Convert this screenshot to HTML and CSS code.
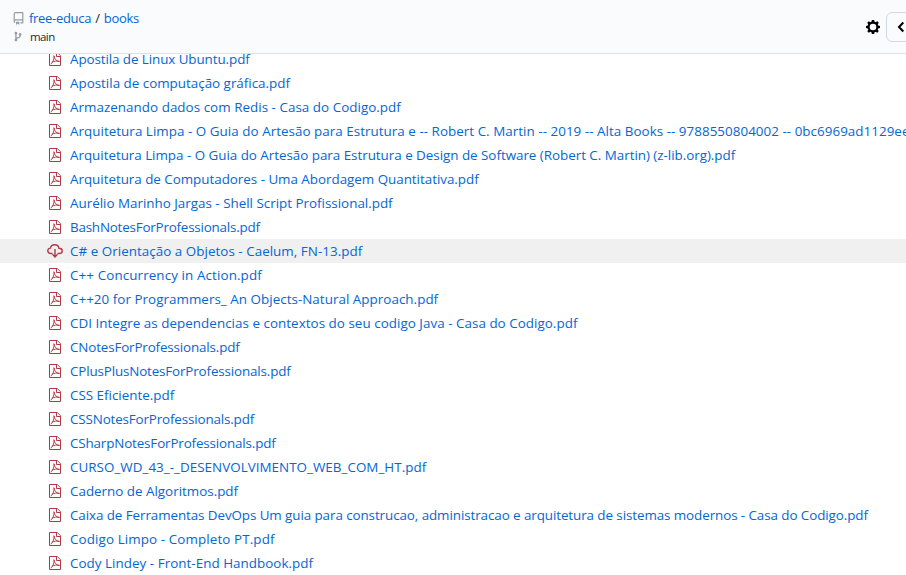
FILE: index.html
```html
<!DOCTYPE html>
<html lang="pt">
<head>
<meta charset="utf-8">
<title>free-educa / books</title>
<link rel="stylesheet" href="styles.css">
</head>
<body>
<svg class="defs" aria-hidden="true">
  <symbol id="pdf" viewBox="0 0 12 16"><path d="M.5 1.500h7.800l3.200 3.300v9.700H.5z"/><path d="M7.500 1.500v4h4" /><path class="thin" d="M1.800 13C3.500 12 5.200 8.500 5.200 5M4.700 4.500c1 2.200 1.200 5.100 5.800 6.200M3 11.200c2-1.100 4.700-1.500 7.500-.9"/></symbol>
</svg>
<header class="header">
  <div class="titles">
    <div class="repo"><svg class="repo-icon" viewBox="0 0 16 16"><path d="M2 2.5A2.5 2.5 0 0 1 4.5 0h8.75a.75.75 0 0 1 .75.75v12.5a.75.75 0 0 1-.75.75h-2.5a.75.75 0 0 1 0-1.5h1.75v-2h-8a1 1 0 0 0-.714 1.7.75.75 0 1 1-1.072 1.05A2.495 2.495 0 0 1 2 11.5Zm10.5-1h-8a1 1 0 0 0-1 1v6.708A2.486 2.486 0 0 1 4.5 9h8ZM5 12.25a.25.25 0 0 1 .25-.25h3.5a.25.25 0 0 1 .25.25v3.25a.25.25 0 0 1-.4.2l-1.45-1.087a.249.249 0 0 0-.3 0L5.4 15.7a.25.25 0 0 1-.4-.2Z"/></svg><a class="owner">free-educa</a><span class="slash">/</span><a>books</a></div>
    <div class="branch"><svg class="branch-icon" viewBox="0 0 10 16"><path d="M10 5c0-1.11-.89-2-2-2a1.993 1.993 0 0 0-1 3.72v.3c-.02.52-.23.98-.63 1.38-.4.4-.86.61-1.38.63-.83.02-1.48.16-2 .45V4.72a1.993 1.993 0 0 0-1-3.72C.88 1 0 1.89 0 3a2 2 0 0 0 1 1.72v6.56c-.59.35-1 .99-1 1.72 0 1.11.89 2 2 2 1.11 0 2-.89 2-2 0-.53-.2-1-.53-1.36.09-.06.48-.41.59-.47.25-.11.56-.17.94-.17 1.05-.05 1.95-.45 2.75-1.25S8.95 7.77 9 6.73h-.02C9.59 6.37 10 5.73 10 5z"/></svg><span>main</span></div>
  </div>
  <svg class="gear" viewBox="0 0 14 14"><path fill-rule="evenodd" d="M5.900 0h2.200l.5 1.800 1 .4 1.600-.9 1.500 1.500-.9 1.600.4 1 1.800.5v2.200l-1.800.5-.4 1 .9 1.600-1.500 1.500-1.600-.9-1 .4-.5 1.800H5.900l-.5-1.800-1-.4-1.600.9-1.500-1.500.9-1.600-.4-1L0 8.100V5.900l1.800-.5.4-1-.9-1.600 1.500-1.500 1.600.9 1-.4zM7 3.700a3.300 3.300 0 1 0 0 6.600 3.300 3.300 0 0 0 0-6.600z"/></svg>
  <button class="toggle" aria-label="Toggle"><svg viewBox="0 0 8 12"><path d="M6.300 1.500 2 6l4.300 4.500"/></svg></button>
</header>
<ul class="files">
  <li class="snug"><svg><use href="#pdf"/></svg><a>Apostila de Linux Ubuntu.pdf</a></li>
  <li><svg><use href="#pdf"/></svg><a>Apostila de computação gráfica.pdf</a></li>
  <li class="wide"><svg><use href="#pdf"/></svg><a>Armazenando dados com Redis - Casa do Codigo.pdf</a></li>
  <li class="wide"><svg><use href="#pdf"/></svg><a>Arquitetura Limpa - O Guia do Artesão para Estrutura e -- Robert C. Martin -- 2019 -- Alta Books -- 9788550804002 -- 0bc6969ad1129ee</a></li>
  <li class="trim"><svg><use href="#pdf"/></svg><a>Arquitetura Limpa - O Guia do Artesão para Estrutura e Design de Software (Robert C. Martin) (z-lib.org).pdf</a></li>
  <li class="trim"><svg><use href="#pdf"/></svg><a>Arquitetura de Computadores - Uma Abordagem Quantitativa.pdf</a></li>
  <li><svg><use href="#pdf"/></svg><a>Aurélio Marinho Jargas - Shell Script Profissional.pdf</a></li>
  <li class="tighter"><svg><use href="#pdf"/></svg><a>BashNotesForProfessionals.pdf</a></li>
  <li class="hovered wide"><svg class="cloud" viewBox="0 0 16 16"><path d="M5.500 10.500H3.800C2 10.500.8 9.400.8 7.800c0-1.500 1.100-2.600 2.600-2.700C3.800 3.100 5.500 1.800 7.600 1.800c2.400 0 4.100 1.500 4.300 3.500 1.900 0 3.300 1 3.300 2.600s-1.200 2.600-3 2.600h-1.700"/><path d="M8 6v7.500M5.500 11.300 8 14l2.500-2.700"/></svg><a>C# e Orientação a Objetos - Caelum, FN-13.pdf</a></li>
  <li class="wider"><svg><use href="#pdf"/></svg><a>C++ Concurrency in Action.pdf</a></li>
  <li class="wide"><svg><use href="#pdf"/></svg><a>C++20 for Programmers_ An Objects-Natural Approach.pdf</a></li>
  <li class="wide"><svg><use href="#pdf"/></svg><a>CDI Integre as dependencias e contextos do seu codigo Java - Casa do Codigo.pdf</a></li>
  <li class="tight"><svg><use href="#pdf"/></svg><a>CNotesForProfessionals.pdf</a></li>
  <li class="tight"><svg><use href="#pdf"/></svg><a>CPlusPlusNotesForProfessionals.pdf</a></li>
  <li><svg><use href="#pdf"/></svg><a>CSS Eficiente.pdf</a></li>
  <li class="tight"><svg><use href="#pdf"/></svg><a>CSSNotesForProfessionals.pdf</a></li>
  <li class="tight"><svg><use href="#pdf"/></svg><a>CSharpNotesForProfessionals.pdf</a></li>
  <li class="wide"><svg><use href="#pdf"/></svg><a>CURSO_WD_43_-_DESENVOLVIMENTO_WEB_COM_HT.pdf</a></li>
  <li><svg><use href="#pdf"/></svg><a>Caderno de Algoritmos.pdf</a></li>
  <li class="snug"><svg><use href="#pdf"/></svg><a>Caixa de Ferramentas DevOps Um guia para construcao, administracao e arquitetura de sistemas modernos - Casa do Codigo.pdf</a></li>
  <li class="wider"><svg><use href="#pdf"/></svg><a>Codigo Limpo - Completo PT.pdf</a></li>
  <li class="wide"><svg><use href="#pdf"/></svg><a>Cody Lindey - Front-End Handbook.pdf</a></li>
</ul>
</body>
</html>
```
FILE: styles.css
```css
* { box-sizing: border-box; }
body { margin: 0; height: 575px; overflow: hidden; display: flex; flex-direction: column; background: #fff; color: #24292f; font: 13.4px/24px "Open Sans", "Noto Sans", sans-serif; }
svg { display: block; flex: none; }
.defs { position: absolute; width: 0; height: 0; }
a { color: #0366d6; white-space: pre; }
.header { flex: none; height: 54px; display: flex; align-items: center; background: #fafbfc; border-bottom: 1px solid #dfe2e5; overflow: hidden; }
.titles { flex: 1; padding-left: 12px; }
.repo { display: flex; align-items: center; height: 20px; font-size: 13px; letter-spacing: -.25px; }
.repo-icon { width: 13px; height: 13px; margin-right: 4px; fill: #959da5; }
.owner { letter-spacing: -.3px; }
.slash { margin: 0 4px; }
.branch { display: flex; align-items: center; height: 17px; font-size: 11.5px; letter-spacing: -.6px; }
.branch-icon { width: 8px; height: 11px; margin: 0 8px 0 2px; fill: #959da5; }
.gear { width: 14px; height: 14px; margin-right: 6px; fill: #000; }
.toggle { width: 32px; height: 30px; margin-right: -12px; padding: 0 0 0 10px; border: 1px solid #d1d9e2; border-radius: 6px; background: #fafbfc; }
.toggle svg { width: 8px; height: 12px; fill: none; stroke: #000; stroke-width: 2; }
.files { margin: -7px 0 0; padding: 0; list-style: none; position: relative; z-index: -1; }
.files li { display: flex; align-items: center; height: 24px; padding-left: 49px; }
.files li svg { width: 12px; height: 16px; margin-right: 9px; fill: none; stroke: #b03a48; }
.files .thin { stroke-width: .7; }
.files .hovered { background: #f0f0f0; padding-left: 47px; }
.files li .cloud { width: 16px; height: 16px; margin-right: 7px; stroke-width: 1.4; }
.trim { letter-spacing: -.02px; }
.snug { letter-spacing: -.075px; }
.tight { letter-spacing: -.14px; }
.tighter { letter-spacing: -.2px; }
.wide { letter-spacing: .04px; }
.wider { letter-spacing: .11px; }
```
